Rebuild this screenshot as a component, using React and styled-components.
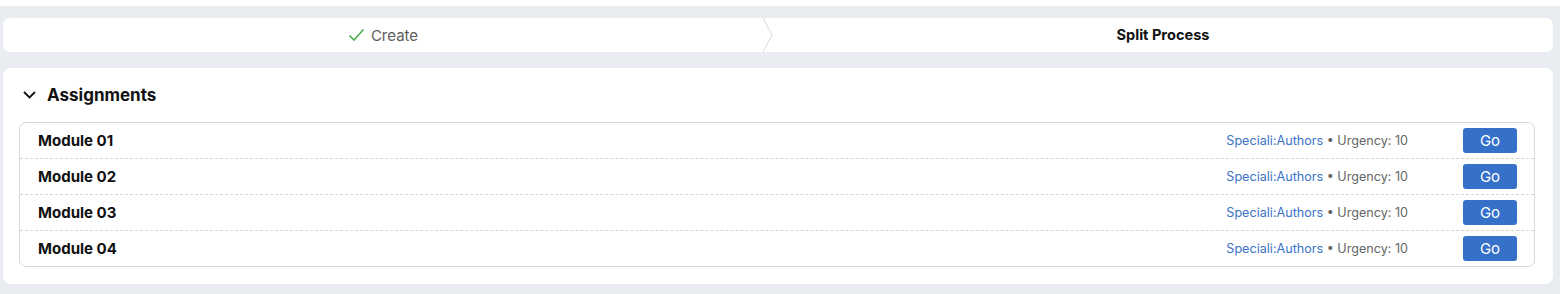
import React from 'react';
import styled, { createGlobalStyle } from 'styled-components';

const GlobalStyle = createGlobalStyle`
  html, body {
    margin: 0;
    padding: 0;
    background: #ffffff;
    font-family: Inter, "Noto Sans", sans-serif;
  }
`;

const Page = styled.div`
  margin-top: 6px;
  width: 1560px;
  box-sizing: border-box;
  background: #e9edf2;
  padding: 12px 7px 11px 3px;
  display: flex;
  flex-direction: column;
  gap: 16px;
`;

const Stepper = styled.div`
  height: 34px;
  background: #ffffff;
  border-radius: 7px;
  display: flex;
  overflow: hidden;
`;

const Step = styled.div`
  flex: ${({ $grow }) => $grow};
  display: flex;
  align-items: center;
  justify-content: center;
  gap: 6px;
  font-size: ${({ $active }) => ($active ? '14.6px' : '15px')};
  font-weight: ${({ $active }) => ($active ? 700 : 400)};
  color: ${({ $active }) => ($active ? '#111111' : '#5c5c5c')};
`;

const Chevron = styled.svg`
  flex: none;
  width: 10px;
  height: 34px;
`;

const Card = styled.section`
  background: #ffffff;
  border-radius: 8px;
  padding: 0 18px 17px 16px;
`;

const CardHeader = styled.div`
  height: 54px;
  display: flex;
  align-items: center;
  gap: 11px;
  padding-left: 4px;
  font-size: 17px;
  font-weight: 700;
  color: #111111;
`;

const List = styled.div`
  border: 1px solid #d8d8d8;
  border-radius: 7px;
  display: flex;
  flex-direction: column;
`;

const Row = styled.div`
  height: 35px;
  display: flex;
  align-items: center;
  padding: 0 17px 0 18px;
  border-top: ${({ $first }) => ($first ? 'none' : '1px dashed #d6d6d6')};
`;

const Title = styled.div`
  flex: 1;
  font-size: 15px;
  font-weight: 700;
  color: #111111;
`;

const Meta = styled.div`
  font-size: 12.6px;
  color: #666666;
  margin-right: 55px;
`;

const Author = styled.span`
  color: #3b73c8;
`;

const GoButton = styled.button`
  width: 54px;
  height: 25px;
  border: none;
  border-radius: 3px;
  background: #3570c9;
  color: #ffffff;
  font-family: Inter, "Noto Sans", sans-serif;
  font-size: 15px;
  padding: 0;
  cursor: pointer;
`;

const modules = ['Module 01', 'Module 02', 'Module 03', 'Module 04'];

export default function App() {
  return (
    <>
      <GlobalStyle />
      <Page>
        <Stepper>
          <Step $grow={760}>
            <svg width="17" height="14" viewBox="0 0 17 14">
              <path d="M1.5 7.5 L6 12 L15.5 1.5" fill="none" stroke="#4caf50" strokeWidth="1.6" />
            </svg>
            Create
          </Step>
          <Chevron viewBox="0 0 10 34">
            <path d="M0 0 L9 17 L0 34" fill="none" stroke="#d9d9d9" strokeWidth="1" />
          </Chevron>
          <Step $grow={780} $active>Split Process</Step>
        </Stepper>

        <Card>
          <CardHeader>
            <svg width="13" height="8" viewBox="0 0 13 8">
              <path d="M1 1 L6.5 6.5 L12 1" fill="none" stroke="#111" strokeWidth="1.8" />
            </svg>
            Assignments
          </CardHeader>
          <List>
            {modules.map((m, i) => (
              <Row key={m} $first={i === 0}>
                <Title>{m}</Title>
                <Meta>
                  <Author>Speciali:Authors</Author> • Urgency: 10
                </Meta>
                <GoButton>Go</GoButton>
              </Row>
            ))}
          </List>
        </Card>
      </Page>
    </>
  );
}
